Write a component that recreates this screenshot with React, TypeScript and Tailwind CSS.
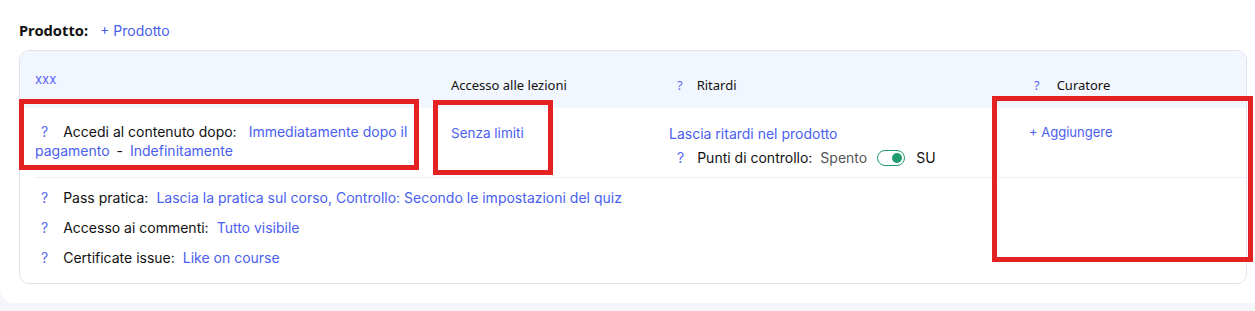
import React from 'react';

const Q: React.FC<{ className?: string }> = ({ className = '' }) => (
    <span className={`text-[#5a67f2] ${className}`}>?</span>
);

const Toggle: React.FC = () => (
    <span className="inline-flex items-center w-[28px] h-[16px] rounded-full border-[1.5px] border-[#1f9d6e] bg-white justify-end px-[2px]">
        <span className="w-[10px] h-[10px] rounded-full bg-[#1f9d6e]" />
    </span>
);

const App: React.FC = () => {
    return (
        <div className="w-[1255px] h-[311px] bg-[#f4f6fa] overflow-hidden relative font-['Inter',sans-serif]">
            <div className="bg-white h-[303px] rounded-bl-[14px] pt-[20px] pl-[19px]">
                <div className="flex items-center gap-[12px] h-[20px]">
                    <span className="font-['Noto_Sans',sans-serif] font-bold text-[14.7px] text-[#111]">Prodotto:</span>
                    <span className="text-[14px] text-[#4a5ef0]">+ Prodotto</span>
                </div>

                <div className="mt-[10px] w-[1228px] h-[234px] border border-[#dfe1ef] rounded-[10px] overflow-hidden">
                    <div className="h-[57px] bg-[#f2f6fe] grid grid-cols-[416px_218px_358px_1fr] pl-[15px] text-[13px] font-['Noto_Sans',sans-serif] text-[#111]">
                        <div className="pt-[19px] text-[#5a67f2] font-['Inter',sans-serif]">xxx</div>
                        <div className="pt-[25px]">Accesso alle lezioni</div>
                        <div className="pt-[25px] pl-[8px] flex gap-[14px]"><Q /><span>Ritardi</span></div>
                        <div className="pt-[25px] pl-[7px] flex gap-[17px]"><Q /><span>Curatore</span></div>
                    </div>

                    <div className="h-[70px] grid grid-cols-[416px_218px_360px_1fr] ml-[14px] pl-[1px] text-[14px] text-[#111] border-b border-[#eeeff3]">
                        <div className="pt-[14px] leading-[19px] pr-[2px]">
                            <Q className="ml-[6px] mr-[15px]" />
                            <span>Accedi al contenuto dopo:</span>
                            <span className="ml-[12px] text-[#4a5ef0]">Immediatamente dopo il pagamento</span>
                            <span className="mx-[7px]">-</span>
                            <span className="text-[#4a5ef0]">Indefinitamente</span>
                        </div>
                        <div className="pt-[15px] text-[#4a5ef0] text-[13.5px]">Senza limiti</div>
                        <div className="pt-[15px] flex flex-col gap-[3px]">
                            <span className="text-[#4a5ef0]">Lascia ritardi nel prodotto</span>
                            <div className="flex items-center pl-[8px]">
                                <Q className="mr-[13px]" />
                                <span>Punti di controllo:</span>
                                <span className="ml-[8px] text-[#555]">Spento</span>
                                <span className="ml-[10px]"><Toggle /></span>
                                <span className="ml-[11px]">SU</span>
                            </div>
                        </div>
                        <div className="pt-[15px] text-[#4a5ef0] text-[13px]">+ Aggiungere</div>
                    </div>

                    <div className="pt-[10px] pl-[21px] text-[14px] text-[#111] flex flex-col gap-[10px] leading-[20px]">
                        <div><Q className="mr-[15px]" />Pass pratica:<span className="ml-[8px] text-[#4a5ef0]">Lascia la pratica sul corso, Controllo: Secondo le impostazioni del quiz</span></div>
                        <div><Q className="mr-[15px]" />Accesso ai commenti:<span className="ml-[8px] text-[#4a5ef0]">Tutto visibile</span></div>
                        <div><Q className="mr-[15px]" />Certificate issue:<span className="ml-[8px] text-[#4a5ef0]">Like on course</span></div>
                    </div>
                </div>
            </div>

            {/* annotation boxes */}
            <div className="absolute left-[19px] top-[99px] w-[400px] h-[71px] border-[5px] border-[#e52222]" />
            <div className="absolute left-[433px] top-[100px] w-[120px] h-[75px] border-[5px] border-[#e52222]" />
            <div className="absolute left-[992px] top-[96px] w-[261px] h-[166px] border-[5px] border-[#e52222]" />
        </div>
    );
};

export default App;
